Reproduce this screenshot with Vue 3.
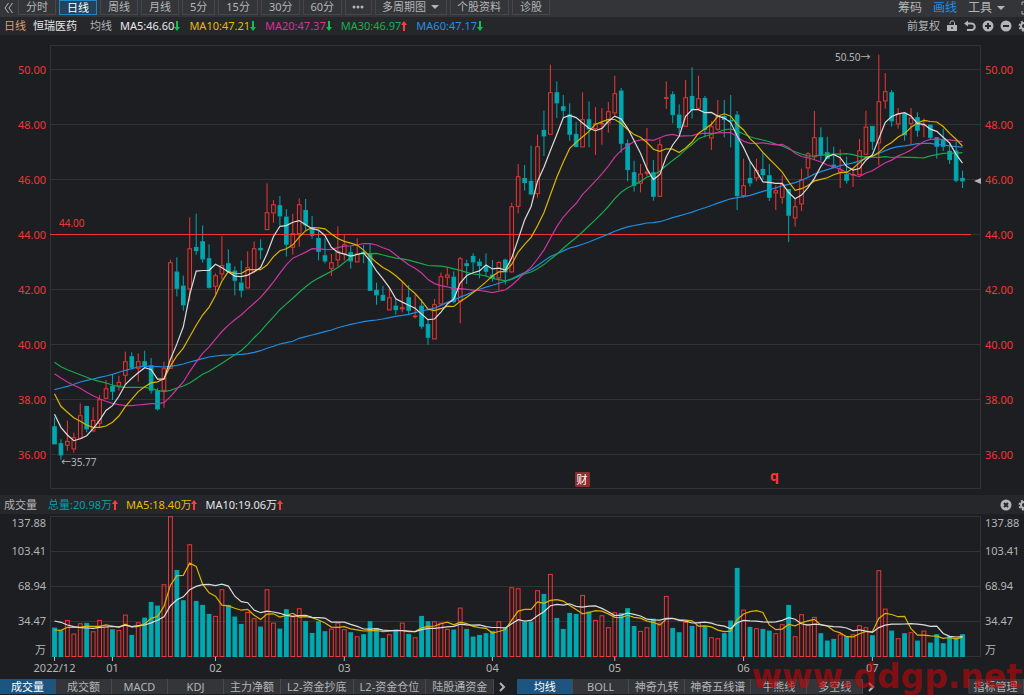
<script setup>
const periods = ['分时', '日线', '周线', '月线', '5分', '15分', '30分', '60分']
const averages = [
  { text: 'MA5:46.60', up: false, cls: 'c-white' },
  { text: 'MA10:47.21', up: false, cls: 'c-yellow' },
  { text: 'MA20:47.37', up: false, cls: 'c-pink' },
  { text: 'MA30:46.97', up: true, cls: 'c-green' },
  { text: 'MA60:47.17', up: false, cls: 'c-blue' },
]
const volumeStats = [
  { text: '总量:20.98万', cls: 'c-teal' },
  { text: 'MA5:18.40万', cls: 'c-yellow' },
  { text: 'MA10:19.06万', cls: 'c-white' },
]
const indicators = ['成交量', '成交额', 'MACD', 'KDJ', '主力净额', 'L2-资金抄底', 'L2-资金仓位', '陆股通资金']
const overlays = ['均线', 'BOLL', '神奇九转', '神奇五线谱', '牛熊线', '多空线']

const START = 54.5
const PITCH = 6.44
const cx = (i) => START + PITCH * i
const nums = (s) => s.trim().split(/[\s,]+/).map(Number)

/* Candles: direction, high, body top, body bottom, low; three steps per unit, measured from `base`. */
const blocks = [
  { base: 180, rows: `d 712 739 793 793;d 778 790 826 839;u 722 783 797 812;u 758 772 808 818;u 670 706 776 776;d 678 678 748 757;u 682 720 754 757;u 645 658 731 745;u 600 625 656 656;d 583 618 635 660;u 587 606 619 632;u 515 544 587 612;d 517 529 563 568;u 520 544 566 605;d 512 544 559 559;d 534 556 632 641;d 625 631 688 692;u 545 565 632 683;u 239 247 566 566;d 232 275 326 349;d 287 317 376 392;u 112 205 328 364;d 101 201 213 224;d 136 184 238 248;d 193 235 323 326;u 280 286 320 342;u 168 256 283 298;d 208 250 275 275;d 259 272 302 346;d 242 308 332 352;u 214 262 325 325;u 184 205 275 280;d 178 204 211 238;u 10 97 150 150;u 60 73 100 128;d 48 76 109 136` },
  { base: 180, rows: `d 87 110 194 230;u 101 160 203 224;u 55 73 162 200;d 57 90 136 150;d 108 143 167 176;d 152 174 215 241;d 175 226 244 250;u 222 247 266 288;u 139 213 241 260;u 164 193 222 241;d 200 217 244 266;u 175 221 247 247;d 195 215 222 250;d 190 220 332 332;d 308 330 346 374;d 318 345 362 362;u 326 352 391 391;d 356 377 390 404;u 304 382 388 397;d 315 352 392 402;u 344 407 411 415;d 358 377 440 446;d 417 432 473 494;u 357 373 478 478;u 278 289 373 376;u 262 284 293 316;d 274 290 366 370;u 231 235 364 430;d 239 250 258 312;d 220 228 247 280;d 236 245 258 295` },
  { base: 50, rows: `d 610 648 665 680;d 630 674 685 695;u 634 636 685 720;d 626 629 667 703;u 458 469 667 668;u 342 379 470 490;d 345 384 399 422;d 287 393 433 436;u 254 289 432 443;d 182 240 259 318;u 44 127 254 254;d 94 127 160 204;d 135 169 182 205;d 160 193 254 272;d 216 252 291 291;u 127 208 292 292;d 154 208 238 292;u 171 220 237 315;u 174 219 223 284;u 156 184 220 248;u 77 130 190 196;d 114 122 281 308;d 268 280 360 394;d 332 367 407 425;u 342 371 401 427;u 234 365 371 378;d 330 367 440 452;u 266 283 440 440;u 94 142 146 177;d 124 133 195 220;d 163 194 234 252;u 90 142 230 230;d 52 138 180 206;u 77 145 176 180;d 138 144 240 262;u 214 229 265 300` },
  { base: 40, rows: `u 180 228 269 272;d 180 228 240 292;d 165 240 242 322;d 213 224 468 510;u 356 436 468 474;d 366 414 430 440;u 356 390 415 424;d 336 387 405 418;d 372 406 473 483;u 436 451 460 510;u 406 432 473 491;d 447 447 527 606;u 475 499 535 560;u 386 418 493 513;u 336 340 385 410;u 213 292 352 360;d 262 292 346 362;d 290 337 356 356;d 320 374 384 384;u 328 388 397 444;d 350 402 422 431;u 385 402 406 441;u 297 331 405 405;u 212 260 344 344;d 258 258 305 330;u 44 184 310 376;u 99 154 184 206;d 150 157 244 260;u 204 221 253 266;d 220 220 286 302;u 204 233 252 313;d 217 232 272 290;u 235 253 257 292;d 254 254 293 297;d 292 292 320 356;d 266 299 320 333;d 306 333 360 372;d 306 332 422 427;d 392 414 424 444` },
]
const candles = blocks
  .flatMap(({ base, rows }) =>
    rows.split(';').map((row) => {
      const [dir, ...v] = row.trim().split(' ')
      const [high, top, bottom, low] = v.map((n) => base + Number(n) / 3)
      return { up: dir === 'u', high, top, bottom, low }
    }),
  )
  .map((c, i) => ({ ...c, x: cx(i) }))

/* Moving averages: the opening points come from earlier sessions, the rest from the closes. */
const movingAverage = (values, n, lead) => {
  const out = values.map((_, i) => {
    if (i < n - 1) return lead[i]
    let sum = 0
    for (let k = i - n + 1; k <= i; k++) sum += values[k]
    return sum / n
  })
  return out.map((y, i) => `${cx(i).toFixed(1)},${y.toFixed(1)}`).join(' ')
}
const scaled = (base, s) => nums(s).map((n) => base + n / 3)
const closes = candles.map((c) => (c.up ? c.top : c.bottom))
const priceLines = [
  { cls: 's-blue', points: movingAverage(closes, 60, scaled(180, '629 624 619 613 606 601 597 592 588 583 577 571 566 561 559 559 560 561 559 556 552 546 541 536 531 528 526 525 524 523 521 517 512 505 499 492 488 484 475 470 465 460 455 450 443 438 433 429 425 422 420 417 413 409 406 403 398 393 389')) },
  { cls: 's-green', points: movingAverage(closes, 30, scaled(180, '547 560 569 577 584 592 599 604 609 615 620 622 622 622 622 625 631 635 631 624 618 609 596 583 574 562 550 537 524')) },
  { cls: 's-pink', points: movingAverage(closes, 20, scaled(180, '581 594 606 616 625 637 647 656 664 670 674 677 677 675 673 671 671 668 650')) },
  { cls: 's-yellow', points: movingAverage(closes, 10, scaled(180, '641 679 697 713 724 735 742 742 738')) },
  { cls: 's-white', points: movingAverage(closes, 5, scaled(180, '703 742 765 782')) },
]

const volumeTops = scaled(490, `413 422 390 431 400 399 424 390 409 418 420 374 435 397 383 336 347 283 79 240 331 163 333 345 372 378 298 345 380 402 366 385 410 298 398 416 358 379 355 393 429 394 424
 416 398 418 427 439 433 394 414 444 433 419 398 432 442 378 394 394 398 417 419 353 417 440 435 430 423 394 412 292 295 396 395 301 312 252 384 417 369 372 315 365 390 376 412 367 369 355 408 423 412 386 398 318 414 427
 396 408 398 409 442 445 430 392 234 359 411 415 417 422 430 403 345 439 373 402 381 430 452 447 433 438 433 406 412 436 241 356 422 445 430 427 452 422 458 433 460 439 444 433`)
const bars = candles.map((c, i) => ({ x: c.x, top: volumeTops[i], up: c.up }))
const volumeLines = [
  { cls: 's-yellow', points: movingAverage(volumeTops, 5, scaled(490, '420 421 412 412')) },
  { cls: 's-white', points: movingAverage(volumeTops, 10, scaled(490, '393 397 405 410 413 414 415 412 411')) },
]

const priceGrid = [50, 48, 46, 44, 42, 40, 38, 36].map((p, i) => ({ label: p.toFixed(2), y: 69 + i * 55 }))
const volumeGrid = [
  { label: '137.88', y: 516, text: 527 },
  { label: '103.41', y: 551, text: 555 },
  { label: '68.94', y: 586, text: 590 },
  { label: '34.47', y: 621, text: 625 },
]
const months = [['2022/12', 0], ['01', 9], ['02', 25], ['03', 45], ['04', 68], ['05', 87], ['06', 107], ['07', 127]]
  .map(([label, i]) => ({ label, x: cx(i) }))
</script>

<template>
  <main class="app">
    <nav class="top">
      <button class="plain back" aria-label="收起">
        <svg width="10" height="12" viewBox="0 0 10 12"><path d="M4.500 1 1 6l3.500 5M8.500 1 5 6l3.500 5" /></svg>
      </button>
      <button v-for="p in periods" :key="p" class="box" :class="{ on: p === '日线' }">{{ p }}</button>
      <button class="box" aria-label="更多">
        <svg width="12" height="4" viewBox="0 0 12 4"><circle cx="2" cy="2" r="1.500" /><circle cx="6" cy="2" r="1.500" /><circle cx="10" cy="2" r="1.500" /></svg>
      </button>
      <button class="box">多周期图<svg class="caret" width="8" height="4" viewBox="0 0 8 4"><path d="M0 0h8L4 4z" /></svg></button>
      <button class="box">个股资料</button>
      <button class="box">诊股</button>
      <div class="tools">
        <button class="plain">筹码</button>
        <button class="plain active">画线</button>
        <button class="plain">工具<svg class="caret" width="8" height="4" viewBox="0 0 8 4"><path d="M0 0h8L4 4z" /></svg></button>
        <button class="plain full" aria-label="全屏">
          <svg width="12" height="14" viewBox="0 0 12 14"><path d="M1 4V1h3M1 10v3h3M8 1h3v3M8 13h3v-3" /></svg>
        </button>
      </div>
    </nav>

    <header class="legend main">
      <span class="c-orange">日线</span>
      <span class="stock">恒瑞医药</span>
      <span class="avg">均线</span>
      <span v-for="a in averages" :key="a.text" class="stat" :class="a.cls">{{ a.text }}<svg width="6" height="10" viewBox="0 0 6 10" :class="a.up ? 'up' : 'down'"><path :d="a.up ? 'M3 0 6 4H4v6H2V4H0z' : 'M3 10 0 6h2V0h2v6h2z'" /></svg></span>
      <div class="icons">
        <button class="plain">前复权</button>
        <button class="plain" aria-label="锁定">
          <svg width="12" height="12" viewBox="0 0 12 12"><path class="line" d="M4 4V3a2.300 2.300 0 0 1 4.500-.5V5" /><path fill-rule="evenodd" d="M1 5h10v6H1zM5.300 7v2h1.400V7z" /></svg>
        </button>
        <button class="plain" aria-label="撤销">
          <svg width="12" height="12" viewBox="0 0 12 12"><path class="line bold" d="M2 3.500h5.500a3.200 3.200 0 0 1 0 6.500H3" /><path d="M0 3.500 4 .5v6z" /></svg>
        </button>
        <button class="plain" aria-label="放大">
          <svg width="12" height="12" viewBox="0 0 12 12"><circle cx="6" cy="6" r="5.500" /><path class="cut" d="M6 3v6M3 6h6" /></svg>
        </button>
        <button class="plain" aria-label="缩小">
          <svg width="12" height="12" viewBox="0 0 12 12"><circle cx="6" cy="6" r="5.500" /><path class="cut" d="M3 6h6" /></svg>
        </button>
        <button class="plain" aria-label="设置">
          <svg width="12" height="12" viewBox="0 0 12 12"><circle class="teeth" cx="6" cy="6" r="4.500" /><circle class="ring" cx="6" cy="6" r="3" /></svg>
        </button>
      </div>
    </header>

    <svg class="chart" viewBox="0 36 1024 459" role="img" aria-label="日线 恒瑞医药">
      <g class="grid">
        <path d="M50.500 45V488.500H980.500V45M50 45.500H981" />
        <path v-for="g in priceGrid" :key="g.label" :d="`M51 ${g.y + 0.5}H980`" />
      </g>
      <g class="price">
        <template v-for="g in priceGrid" :key="g.label">
          <text x="46" :y="g.y + 5" text-anchor="end">{{ g.label }}</text>
          <text x="985" :y="g.y + 5">{{ g.label }}</text>
        </template>
        <text class="small" x="59" y="227">44.00</text>
      </g>
      <g v-for="(c, i) in candles" :key="i" :class="c.up ? 'rise' : 'fall'">
        <path :d="`M${c.x} ${c.high}V${c.top}M${c.x} ${c.bottom}V${c.low}`" />
        <rect :x="c.x - 1.8" :y="c.top + 0.4" width="3.6" :height="Math.max(c.bottom - c.top - 0.8, 0.6)" />
      </g>
      <path class="level" d="M50 234.500H971" />
      <polyline v-for="l in priceLines" :key="l.cls" :class="l.cls" :points="l.points" />
      <text class="note" x="61" y="466">←35.77</text>
      <text class="note" x="835" y="61">50.50→</text>
      <path class="pointer" d="M974 181l7-3v6z" />
      <rect class="badge" x="575" y="472" width="15" height="15" rx="1" />
      <text class="badge-text" x="582" y="484" text-anchor="middle">财</text>
      <text class="mark" x="770" y="481">q</text>
    </svg>

    <header class="legend">
      <span class="title">成交量</span>
      <span v-for="v in volumeStats" :key="v.text" class="stat" :class="v.cls">{{ v.text }}<svg width="6" height="10" viewBox="0 0 6 10" class="up"><path d="M3 0 6 4H4v6H2V4H0z" /></svg></span>
      <div class="icons">
        <button class="plain" aria-label="关闭">
          <svg width="12" height="12" viewBox="0 0 12 12"><circle cx="6" cy="6" r="5.500" /><path class="cut" d="M4 4l4 4M8 4 4 8" /></svg>
        </button>
        <button class="plain" aria-label="设置">
          <svg width="12" height="12" viewBox="0 0 12 12"><circle class="teeth" cx="6" cy="6" r="4.500" /><circle class="ring" cx="6" cy="6" r="3" /></svg>
        </button>
      </div>
    </header>

    <svg class="chart" viewBox="0 514 1024 165" role="img" aria-label="成交量">
      <g class="grid">
        <path d="M50.500 516V656.500H980.500V516" />
        <path v-for="g in volumeGrid" :key="g.label" :d="`M50 ${g.y + 0.5}H981`" />
      </g>
      <g class="axis">
        <template v-for="g in volumeGrid" :key="g.label">
          <text x="46" :y="g.text" text-anchor="end">{{ g.label }}</text>
          <text x="985" :y="g.text">{{ g.label }}</text>
        </template>
        <text x="46" y="654" text-anchor="end">万</text>
        <text x="985" y="654">万</text>
        <template v-for="m in months" :key="m.label">
          <path class="tick" :d="`M${m.x} 657v4`" />
          <text :x="m.x" y="672" text-anchor="middle">{{ m.label }}</text>
        </template>
      </g>
      <g v-for="(b, i) in bars" :key="i" :class="b.up ? 'rise' : 'fall'">
        <rect :x="b.x - 1.9" :y="b.top + 0.4" width="3.8" :height="656.5 - b.top - 0.4" />
      </g>
      <polyline v-for="l in volumeLines" :key="l.cls" :class="l.cls" :points="l.points" />
    </svg>

    <footer class="tabs">
      <button v-for="t in indicators" :key="t" class="tab" :class="{ on: t === '成交量' }">{{ t }}</button>
      <button class="next" aria-label="更多指标"><svg width="8" height="10" viewBox="0 0 8 10"><path d="M2 1l4 4-4 4" /></svg></button>
      <button v-for="t in overlays" :key="t" class="tab" :class="{ on: t === '均线' }">{{ t }}</button>
      <button class="next" aria-label="更多主图指标"><svg width="8" height="10" viewBox="0 0 8 10"><path d="M2 1l4 4-4 4" /></svg></button>
      <button class="tab manage">指标管理</button>
    </footer>
    <div class="site">www.ddgp.net</div>
  </main>
</template>

<style>
body {
  background: #1c1e21;
}
</style>

<style scoped>
.app {
  position: relative;
  overflow: hidden;
  min-height: 100vh;
  background: #1c1e21;
  color: #b4b5b7;
  font-family: "Noto Sans", "Noto Sans CJK SC", sans-serif;
  font-size: 11px;
  line-height: 16px;
}
button {
  display: flex;
  align-items: center;
  justify-content: center;
  flex: none;
  margin: 0;
  padding: 0;
  border: 0;
  background: none;
  color: inherit;
  font: inherit;
  white-space: nowrap;
  cursor: pointer;
}
svg {
  flex: none;
  fill: currentColor;
}
.top {
  display: flex;
  gap: 3px;
  height: 17px;
  padding-left: 2px;
  background: #333539;
}
.box {
  height: 15px;
  padding: 0 7px 0 6px;
  border: 1px solid #45474b;
  border-top: 0;
  line-height: 14px;
}
.box:nth-child(-n + 8),
.box:last-of-type {
  padding: 0 7px;
}
.box.on {
  border: 1px solid #2484c8;
  background: #23435c;
  color: #ffffff;
}
.back {
  width: 13px;
  height: 15px;
}
.back svg,
.full svg {
  fill: none;
  stroke: currentColor;
}
.caret {
  margin-left: 5px;
}
.tools {
  display: flex;
  gap: 11px;
  height: 15px;
  margin-left: auto;
  margin-right: -9px;
  font-size: 12px;
}
.tools .full {
  margin-left: 5px;
}
.active {
  color: #2090e8;
}
.legend {
  display: flex;
  align-items: center;
  height: 19px;
  padding-left: 4px;
  background: #25272b;
  white-space: nowrap;
}
.main {
  height: 18px;
  border-bottom: 1px solid #1f2125;
}
.stock {
  margin-left: 7px;
  color: #e8e8e8;
}
.avg {
  margin: 0 8px 0 13px;
}
.stat {
  display: flex;
  align-items: center;
  margin-right: 8px;
}
.main .stat {
  margin-right: 9px;
}
.title {
  margin-right: 11px;
}
.icons {
  display: flex;
  align-items: center;
  gap: 6px;
  margin-left: auto;
  margin-right: -6px;
}
.line,
.cut,
.teeth,
.ring {
  fill: none;
  stroke: currentColor;
}
.bold {
  stroke-width: 2;
}
.cut {
  stroke: #25272b;
  stroke-width: 2;
}
.teeth {
  stroke-width: 2;
  stroke-dasharray: 2 1.5;
}
.ring {
  stroke-width: 2;
}
.up {
  color: #ff3b3b;
}
.down {
  color: #10c050;
}
.c-orange { color: #d9a070; }
.c-white { color: #e8e8e8; }
.c-yellow { color: #e8bc00; }
.c-pink { color: #d8309c; }
.c-green { color: #18b04c; }
.c-blue { color: #2090e8; }
.c-teal { color: #00a0a8; }
.chart {
  display: block;
  width: 100%;
  height: auto;
}
.grid path {
  fill: none;
  stroke: #303236;
}
.price text {
  fill: #f03636;
}
.price .small,
.note {
  font-size: 10px;
}
.axis text,
.note {
  fill: #b4b5b7;
}
.tick {
  stroke: #b4b5b7;
}
.rise path,
.rise rect {
  fill: none;
  stroke: #f03636;
}
.fall path {
  stroke: #00a8b0;
}
.fall rect {
  fill: #00a8b0;
  stroke: #00a8b0;
}
.level {
  stroke: #f03636;
}
polyline {
  fill: none;
  stroke-width: 1.2;
}
.s-white { stroke: #dcdcdc; }
.s-yellow { stroke: #dcb400; }
.s-pink { stroke: #cc34a0; }
.s-green { stroke: #18a84c; }
.s-blue { stroke: #208ce0; }
.pointer {
  fill: #b4b5b7;
}
.badge {
  fill: #8c2c2c;
}
.badge-text {
  fill: #ffffff;
}
.mark {
  fill: #ff3333;
  font-size: 14px;
  font-weight: 700;
}
.tabs {
  display: flex;
  height: 15px;
}
.tab {
  min-width: 56px;
  padding: 0 6px;
  border-right: 1px solid #48494d;
  background: #333539;
  line-height: 15px;
}
.tab:nth-child(n + 10) {
  padding: 0 5px;
}
.tab.on {
  background: #1b5580;
  color: #ffffff;
}
.next {
  width: 16px;
  margin-right: 7px;
}
.next svg {
  fill: none;
  stroke: currentColor;
  stroke-width: 2;
}
.manage {
  margin-left: auto;
}
.site {
  position: absolute;
  right: 2px;
  bottom: 2px;
  color: rgba(196, 6, 10, 0.6);
  font-family: "DejaVu Sans", sans-serif;
  font-size: 33px;
  font-weight: 700;
  line-height: 33px;
  pointer-events: none;
}
</style>
